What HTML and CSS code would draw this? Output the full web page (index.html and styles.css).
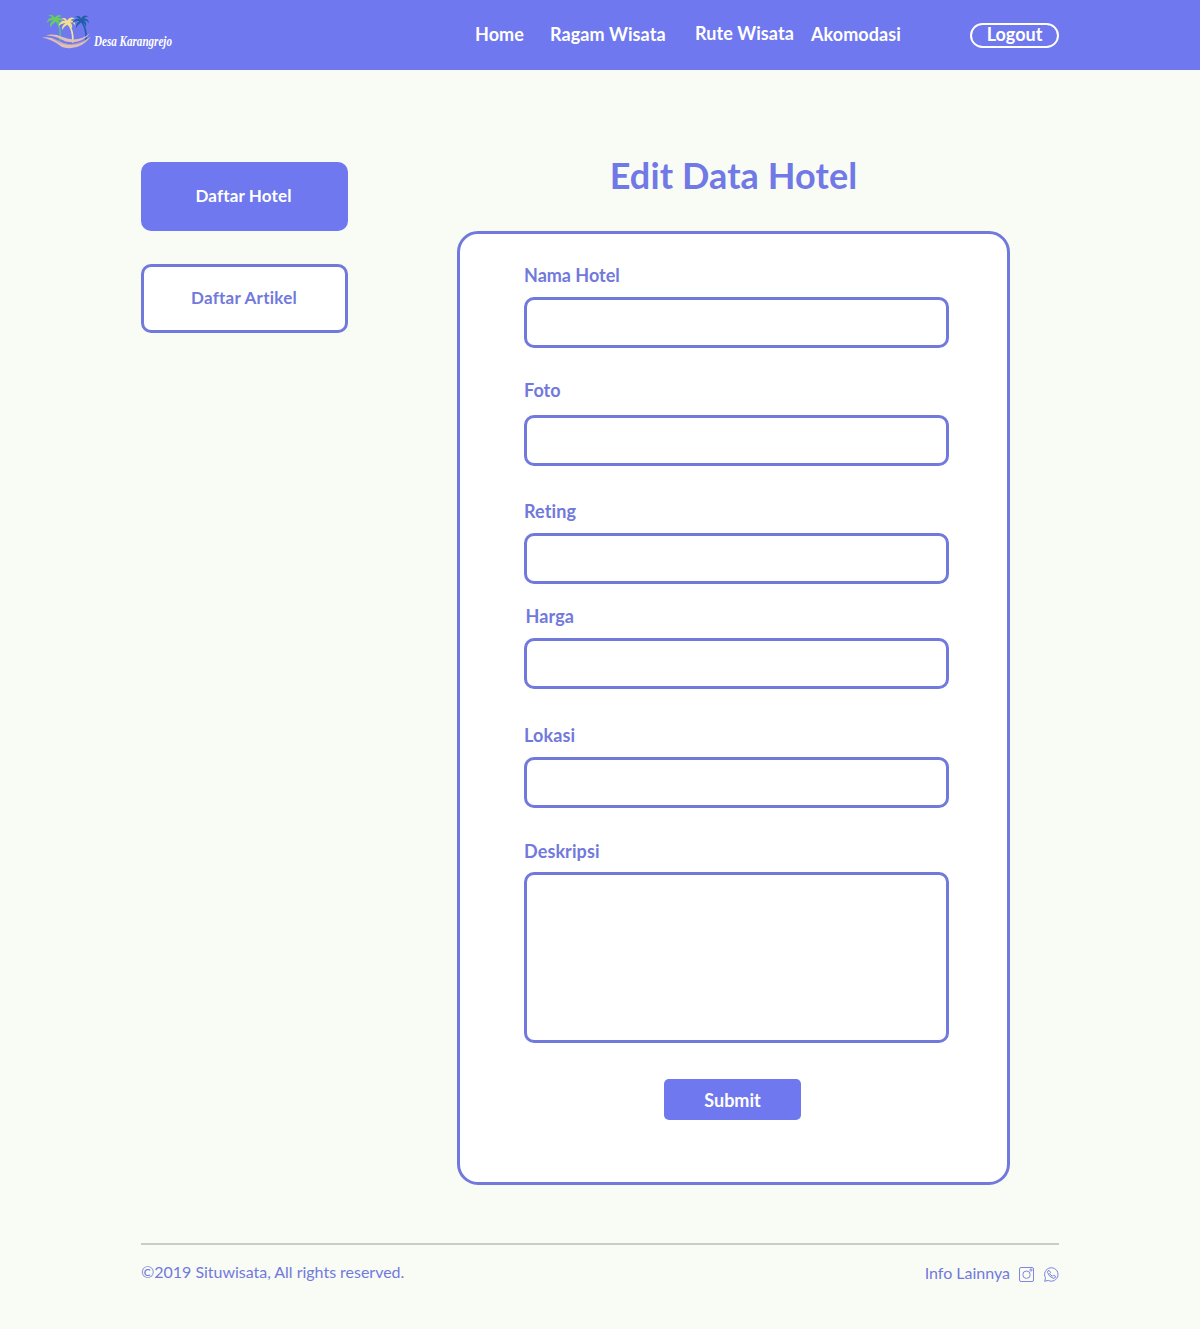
FILE: index.html
```html
<!DOCTYPE html>
<html lang="id">
<head>
<meta charset="utf-8">
<title>Edit Data Hotel</title>
<link rel="stylesheet" href="styles.css">
</head>
<body>
<header class="topbar">
  <a class="logo" aria-label="Desa Karangrejo">
    <svg width="160" height="60" viewBox="0 0 160 60">
      <g fill="none" stroke-linecap="round">
        <path d="M26 16Q31.500 22 30 35" stroke="#55c28a" stroke-width="1.500"/>
        <path d="M37 18Q43.500 24 42.800 37" stroke="#f3e3a0" stroke-width="1.700"/>
        <path d="M51 16Q57 23 56 35" stroke="#1f5fa8" stroke-width="1.600"/>
      </g>
      <path fill="#66cc62" d="M24.500 12.500Q23 8.500 18.500 10.500Q21.500 11 23 13Q18.500 12 16.500 18Q20 14.500 23.500 15.500Q19.500 17 20 22.500Q22.500 18.500 26 16.500Q29 17 30 21Q31.500 17.500 28 15Q31 14.500 33 17Q32.500 12.500 28 13Q30 10.500 32.500 11.500Q28.500 8 24.500 12.500Z"/>
      <path fill="#f3e08f" d="M37 15.500Q35.500 11.500 31 14Q34 14 35.500 16Q30.500 15 28.500 21Q32.500 17.500 35.500 18.500Q31.500 20 32 25Q34 21.500 37.500 19.500Q41 20 41.500 24Q43.500 20 40 17.500Q43.500 17 45.500 21Q45 15.500 40.500 15.500Q42.500 13 45 14Q40.500 10.500 37 15.500Z"/>
      <path fill="#205fa8" d="M51 13.500Q49.500 9.500 45 12Q48 12 49.500 14Q44.500 13 42 18.500Q46 15 49.500 16.500Q45.500 18 46 23Q48 19.500 51.500 17Q55 18 55.500 22Q57.500 18 54 15.500Q57 15 59 18.500Q58.500 13.500 54 13.500Q56 11 58.500 12Q54 8.500 51 13.500Z"/>
      <path fill="#dfc0b5" d="M14 32.500Q22 30 31 34Q46 40.500 59 30Q49 42 34 38.500L27 35Q21 32 14 32.500Z" transform="translate(0 -4) translate(1.500 2)"/>
      <path fill="#dfc0b5" d="M12 32.500Q20 31 28 35.500Q43 44.500 61 31.500Q49 47 32 42Q22 34 12 32.500Z"/>
      <path d="M22 33Q38 45 56 35.500" fill="none" stroke="#a391ce" stroke-width=".8"/>
      <text class="logo-text" x="64" y="41" textLength="78" lengthAdjust="spacingAndGlyphs">Desa Karangrejo</text>
    </svg>
  </a>
  <nav class="nav">
    <a class="home">Home</a>
    <a class="ragam">Ragam Wisata</a>
    <a class="rute">Rute Wisata</a>
    <a>Akomodasi</a>
  </nav>
  <a class="logout">Logout</a>
</header>

<main class="page">
  <aside class="sidebar">
    <a class="side-link active">Daftar Hotel</a>
    <a class="side-link">Daftar Artikel</a>
  </aside>
  <section class="editor">
    <h1>Edit Data Hotel</h1>
    <form class="card">
      <label for="nama">Nama Hotel</label>
      <input id="nama" type="text">
      <label for="foto" class="foto">Foto</label>
      <input id="foto" type="text">
      <label for="reting" class="reting">Reting</label>
      <input id="reting" type="text">
      <label for="harga" class="harga">Harga</label>
      <input id="harga" type="text">
      <label for="lokasi" class="lokasi">Lokasi</label>
      <input id="lokasi" type="text">
      <label for="deskripsi" class="deskripsi">Deskripsi</label>
      <textarea id="deskripsi"></textarea>
      <button type="button">Submit</button>
    </form>
  </section>
</main>

<footer class="footer">
  <span class="copyright">©2019 Situwisata, All rights reserved.</span>
  <div class="info">
    <span>Info Lainnya</span>
    <svg class="instagram" width="15" height="15" viewBox="0 0 15 15" fill="none" stroke="#8187df">
      <rect x=".5" y=".5" width="14" height="14" rx="1.500"/>
      <circle cx="7.500" cy="7.700" r="3.700"/>
      <circle cx="12" cy="3" r="1.100"/>
    </svg>
    <svg class="whatsapp" width="15" height="15" viewBox="0 0 15 15" fill="none" stroke="#7a80e0">
      <path d="M.7 14.300L1.500 10.800A6.700 6.700 0 1 1 4.200 13.400Z"/>
      <path d="M5 3.300Q3.200 3.800 3.600 5.500Q4.800 9.800 9.200 11.300Q11.500 11.400 11.700 9.400L9.500 8.200L8.500 9.200Q6.600 8.400 5.700 6.500L6.600 5.500Z"/>
    </svg>
  </div>
</footer>
</body>
</html>
```
FILE: styles.css
```css
* { box-sizing: border-box; }

body {
  margin: 0;
  min-height: 1329px;
  background: #f9fcf5;
  color: #7179dc;
  font-family: Lato, sans-serif;
  font-variant-ligatures: none;
}

.topbar {
  display: flex;
  align-items: flex-start;
  height: 70px;
  background: #6f78ee;
  color: #fff;
  font-size: 18px;
  font-weight: 700;
  line-height: 22px;
}

.logo { width: 160px; margin: 5px 0 0 30px; }
.logo svg { display: block; overflow: visible; }
.logo-text {
  fill: #fff;
  font-family: "Liberation Serif", serif;
  font-size: 15px;
  font-style: italic;
  font-weight: 700;
}

.nav { display: flex; width: 495px; margin: 23px 0 0 285px; letter-spacing: 0.08px; white-space: nowrap; }
.home { width: 75px; }
.ragam { width: 145px; }
.rute { width: 116px; margin-top: -1px; }

.logout {
  width: 89px;
  height: 25px;
  margin-top: 23px;
  border: 2px solid #fff;
  border-radius: 13px;
  line-height: 19px;
  text-align: center;
}

.page { display: flex; align-items: flex-start; padding-left: 141px; }

.sidebar { display: grid; gap: 33px; width: 207px; margin-top: 92px; }
.side-link {
  height: 69px;
  padding-right: 1px;
  border: 3px solid #7179dc;
  border-radius: 10px;
  background: #fff;
  font-size: 17px;
  font-weight: 700;
  letter-spacing: 0.25px;
  line-height: 61px;
  text-align: center;
}
.side-link.active {
  padding-right: 2px;
  border-color: #6f78ee;
  background: #6f78ee;
  color: #fff;
  letter-spacing: 0.15px;
}

.editor { width: 553px; margin-left: 109px; }
h1 {
  margin: 83px 0 34px;
  color: #7179e6;
  font-size: 36px;
  font-weight: 700;
  letter-spacing: 0.1px;
  line-height: 44px;
  text-align: center;
}

.card {
  display: flex;
  flex-direction: column;
  height: 954px;
  padding: 30px 58px 0 64px;
  border: 3px solid #7179dc;
  border-radius: 21px;
  background: #fff;
}
label { height: 22px; margin-bottom: 11px; font-size: 18px; font-weight: 700; line-height: 22px; }
input, textarea {
  width: 425px;
  height: 51px;
  margin: 0;
  padding: 0 12px;
  border: 3px solid #7179dc;
  border-radius: 10px;
  background: #fff;
  font: inherit;
  resize: none;
}
textarea { height: 171px; }
.foto { margin: 31px 0 14px; }
.reting { margin-top: 34px; letter-spacing: 0.1px; }
.harga { margin-top: 21px; padding-left: 1.5px; letter-spacing: 0.1px; }
.lokasi { margin-top: 35px; letter-spacing: 0.1px; }
.deskripsi { margin: 32px 0 10px; letter-spacing: 0.1px; }
button {
  width: 137px;
  height: 41px;
  margin: 36px 0 0 140px;
  padding: 2px 0 0;
  border: 0;
  border-radius: 5px;
  background: #6f78ee;
  color: #fff;
  font: 700 18px/39px Lato, sans-serif;
}

.footer {
  display: flex;
  justify-content: space-between;
  width: 918px;
  margin: 58px 0 0 141px;
  padding-top: 17px;
  border-top: 2px solid #c9ccc6;
  font-size: 16px;
  line-height: 20px;
}
.copyright { letter-spacing: -0.02px; }
.info { display: flex; padding-top: 1px; }
.instagram { margin: 4px 10px 0 9px; }
.whatsapp { margin-top: 4px; }
```
